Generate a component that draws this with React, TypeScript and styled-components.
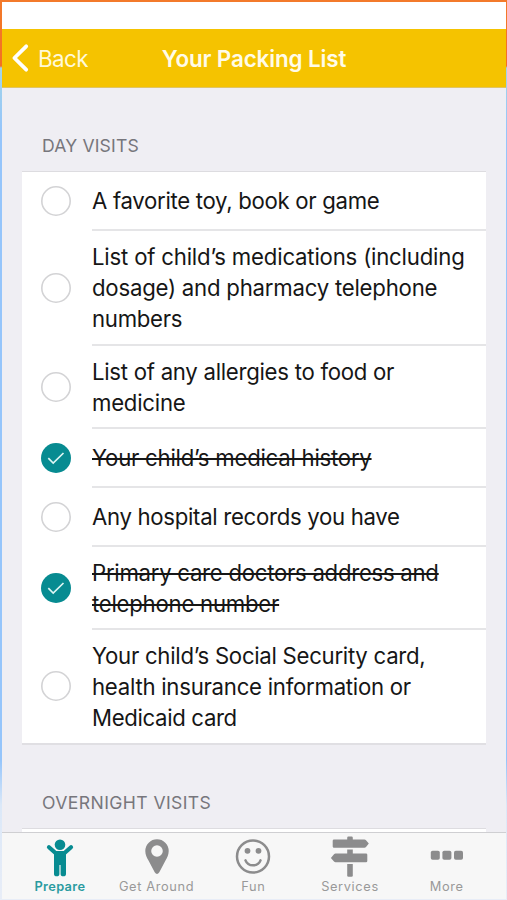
import React from 'react';
import styled, { createGlobalStyle } from 'styled-components';

const teal = '#078b91';
const gray = '#8c8c8d';

const GlobalStyle = createGlobalStyle`
  * { box-sizing: border-box; }
  body { margin: 0; font-family: Inter, "Liberation Sans", sans-serif; }
`;

const Frame = styled.div`
  height: 900px;
  padding: 2px 1px 1px 2px;
  overflow: hidden;
  background: linear-gradient(
    to bottom,
    #f37a2b 0,
    #f37022 66px,
    #a3d5e8 68px,
    #95c5fb 130px,
    #95c5fb 760px,
    #dbe8f8 805px,
    #e8edf7 900px
  );
`;

const Screen = styled.div`
  height: 897px;
  display: flex;
  flex-direction: column;
  background: #efeef3;
`;

const StatusBar = styled.div`
  flex: none;
  height: 27px;
  background: #fff;
`;

const NavBar = styled.header`
  flex: none;
  height: 59px;
  display: grid;
  grid-template-columns: 120px 1fr 120px;
  align-items: center;
  background: #f5c300;
  border-bottom: 1px solid #dfc465;
  color: #fffbe8;
`;

const BackButton = styled.button`
  display: flex;
  align-items: center;
  gap: 8px;
  height: 58px;
  padding: 0 0 0 9px;
  border: 0;
  background: none;
  color: #fff9d8;
  font: 400 22.4px Inter, sans-serif;
  letter-spacing: -0.55px;
`;

const Title = styled.h1`
  margin: 0;
  text-align: center;
  white-space: nowrap;
  font-size: 22.4px;
  font-weight: 600;
  letter-spacing: -0.12px;
`;

const Content = styled.main`
  flex: 1;
  min-height: 0;
  overflow: hidden;
  padding: 0 20px;
`;

const SectionTitle = styled.h2<{ $spacing: number }>`
  margin: 0;
  padding: 47px 0 14px 20px;
  font-size: 17.6px;
  line-height: 22px;
  font-weight: 400;
  letter-spacing: ${(p) => p.$spacing}px;
  color: #77767c;
`;

const Card = styled.ul`
  list-style: none;
  margin: 0;
  padding: 0;
  background: #fff;
  border-top: 1px solid #dddce0;
  border-bottom: 2px solid #e0dfe3;
`;

const Row = styled.li`
  display: grid;
  grid-template-columns: 70px 1fr;
  &:last-child > div { border-bottom: 0; }
`;

const CheckCell = styled.span`
  display: flex;
  align-items: center;
  padding: 0 0 1px 19.4px;
`;

const Circle = styled.svg`
  display: block;
  width: 30px;
  height: 30px;
`;

const ItemBody = styled.div<{ $height: number }>`
  height: ${(p) => p.$height}px;
  display: flex;
  flex-direction: column;
  justify-content: center;
  border-bottom: 2px solid #e5e5e7;
`;

const Line = styled.span<{ $checked: boolean; $spacing: number }>`
  display: block;
  width: max-content;
  font-size: 22.2px;
  line-height: 31px;
  white-space: nowrap;
  letter-spacing: ${(p) => p.$spacing}px;
  color: #161616;
  text-decoration: ${(p) => (p.$checked ? 'line-through' : 'none')};
  text-decoration-thickness: 2px;
`;

const TabBar = styled.nav`
  flex: none;
  height: 67px;
  display: grid;
  grid-template-columns: repeat(5, 96.7px);
  justify-content: center;
  padding-right: 1.4px;
  background: #f7f7f7;
  border-top: 1px solid #cfcfd2;
`;

const Tab = styled.a<{ $active?: boolean }>`
  display: flex;
  flex-direction: column;
  align-items: center;
  padding-top: 2px;
  color: ${(p) => (p.$active ? teal : gray)};
  svg { display: block; width: 44px; height: 44px; }
`;

const TabLabel = styled.span<{ $active?: boolean }>`
  font-size: 12.8px;
  line-height: 16px;
  font-weight: ${(p) => (p.$active ? 600 : 400)};
  letter-spacing: ${(p) => (p.$active ? 0.35 : 0.65)}px;
  color: ${(p) => (p.$active ? '#2a9ba0' : '#999')};
`;

type TextLine = { text: string; spacing: number };
type Item = { lines: TextLine[]; height: number; checked?: boolean };

const line = (text: string, spacing = -0.25): TextLine => ({ text, spacing });

const dayItems: Item[] = [
  { lines: [line('A favorite toy, book or game', -0.31)], height: 59 },
  {
    lines: [
      line('List of child’s medications (including', -0.2),
      line('dosage) and pharmacy telephone', -0.23),
      line('numbers', -0.3),
    ],
    height: 115,
  },
  { lines: [line('List of any allergies to food or', -0.28), line('medicine')], height: 83 },
  { lines: [line('Your child’s medical history')], height: 59, checked: true },
  { lines: [line('Any hospital records you have', -0.31)], height: 59 },
  {
    lines: [line('Primary care doctors address and', -0.28), line('telephone number')],
    height: 83,
    checked: true,
  },
  {
    lines: [
      line('Your child’s Social Security card,', -0.28),
      line('health insurance information or', -0.26),
      line('Medicaid card', -0.35),
    ],
    height: 113,
  },
];

const tabs = [
  {
    label: 'Prepare',
    icon: (
      <svg viewBox="0 0 44 44" fill="currentColor">
        <circle cx="22" cy="9.8" r="5.3" />
        <path d="M11 12.2 L17.5 18 H26.5 L33 12.2" fill="none" stroke="currentColor" strokeWidth="4.2" strokeLinecap="round" strokeLinejoin="round" />
        <path d="M16 17 H28 V39 Q28 41.3 25.3 41.3 Q22.6 41.3 22.6 39 V30 H21.4 V39 Q21.4 41.3 18.7 41.3 Q16 41.3 16 39Z" />
      </svg>
    ),
  },
  {
    label: 'Get Around',
    icon: (
      <svg viewBox="0 0 44 44" fill="currentColor">
        <path fillRule="evenodd" d="M22 4.2 A11.7 11.7 0 0 0 10.3 15.9 C10.3 20 12 22.5 13.5 25.5 L19.7 37.2 Q22 40.7 24.3 37.2 L30.5 25.5 C32 22.5 33.7 20 33.7 15.9 A11.7 11.7 0 0 0 22 4.2Z M22 10.2 A5.8 5.8 0 1 1 22 21.8 A5.8 5.8 0 1 1 22 10.2Z" />
      </svg>
    ),
  },
  {
    label: 'Fun',
    icon: (
      <svg viewBox="0 0 44 44" fill="none" stroke="currentColor" strokeWidth="2.5" strokeLinecap="round">
        <circle cx="22" cy="21.5" r="16" />
        <circle cx="16.5" cy="15.8" r="2.9" fill="currentColor" stroke="none" />
        <circle cx="27.5" cy="15.8" r="2.9" fill="currentColor" stroke="none" />
        <path d="M14.5 25.4 C17 32 27 32 29.5 25.4" />
      </svg>
    ),
  },
  {
    label: 'Services',
    icon: (
      <svg viewBox="0 0 44 44" fill="currentColor">
        <path d="M19.2 4.5 V2.7 Q19.2 1.5 20.4 1.5 H23.6 Q24.8 1.5 24.8 2.7 V4.5 H36.5 Q37.4 4.5 38 5.2 L40.8 8.6 L38 12.1 Q37.4 12.8 36.5 12.8 H6 Q4.7 12.8 4.7 11.5 V5.8 Q4.7 4.5 6 4.5Z" />
        <path d="M19.2 18.5 V14.4 H24.8 V18.5 H38 Q39.3 18.5 39.3 19.8 V26 Q39.3 27.3 38 27.3 H7.5 Q6.6 27.3 6 26.6 L2.9 22.9 L6 19.2 Q6.6 18.5 7.5 18.5Z" />
        <path d="M19.2 29 H24.8 V40.5 Q24.8 41.8 23.5 41.8 H20.5 Q19.2 41.8 19.2 40.5Z" />
      </svg>
    ),
  },
  {
    label: 'More',
    icon: (
      <svg viewBox="0 0 44 44" fill="currentColor">
        <rect x="5.8" y="15.8" width="9" height="9" rx="1.8" />
        <rect x="17.4" y="15.8" width="9" height="9" rx="1.8" />
        <rect x="29" y="15.8" width="9" height="9" rx="1.8" />
      </svg>
    ),
  },
];

function CheckMark({ checked }: { checked: boolean }) {
  return (
    <Circle viewBox="0 0 30 30" fill="none">
      {checked ? (
        <>
          <circle cx="15" cy="15" r="15" fill={teal} />
          <path d="M7.3 15.2 L12.2 20 L22.5 10" stroke="#ddf5f3" strokeWidth="1.7" />
        </>
      ) : (
        <circle cx="15" cy="15" r="14.2" fill="#fff" stroke="#d3d3d5" strokeWidth="1.6" />
      )}
    </Circle>
  );
}

export default function App() {
  return (
    <Frame>
      <GlobalStyle />
      <Screen>
        <StatusBar />
        <NavBar>
          <BackButton>
            <svg width="19" height="30" viewBox="0 0 19 30" fill="none" stroke="#fff" strokeWidth="3.8" strokeLinecap="round" strokeLinejoin="round">
              <path d="M15.2 3.3 L3.4 15 L15.2 26.7" />
            </svg>
            Back
          </BackButton>
          <Title>Your Packing List</Title>
        </NavBar>
        <Content>
          <SectionTitle $spacing={0.15}>DAY VISITS</SectionTitle>
          <Card>
            {dayItems.map((item) => (
              <Row key={item.lines[0].text}>
                <CheckCell>
                  <CheckMark checked={!!item.checked} />
                </CheckCell>
                <ItemBody $height={item.height}>
                  {item.lines.map((l) => (
                    <Line key={l.text} $checked={!!item.checked} $spacing={l.spacing}>
                      {l.text}
                    </Line>
                  ))}
                </ItemBody>
              </Row>
            ))}
          </Card>
          <SectionTitle $spacing={0.4}>OVERNIGHT VISITS</SectionTitle>
          <Card>
            <Row>
              <CheckCell />
              <ItemBody $height={59} />
            </Row>
          </Card>
        </Content>
        <TabBar>
          {tabs.map((tab, i) => (
            <Tab key={tab.label} $active={i === 0}>
              {tab.icon}
              <TabLabel $active={i === 0}>{tab.label}</TabLabel>
            </Tab>
          ))}
        </TabBar>
      </Screen>
    </Frame>
  );
}
